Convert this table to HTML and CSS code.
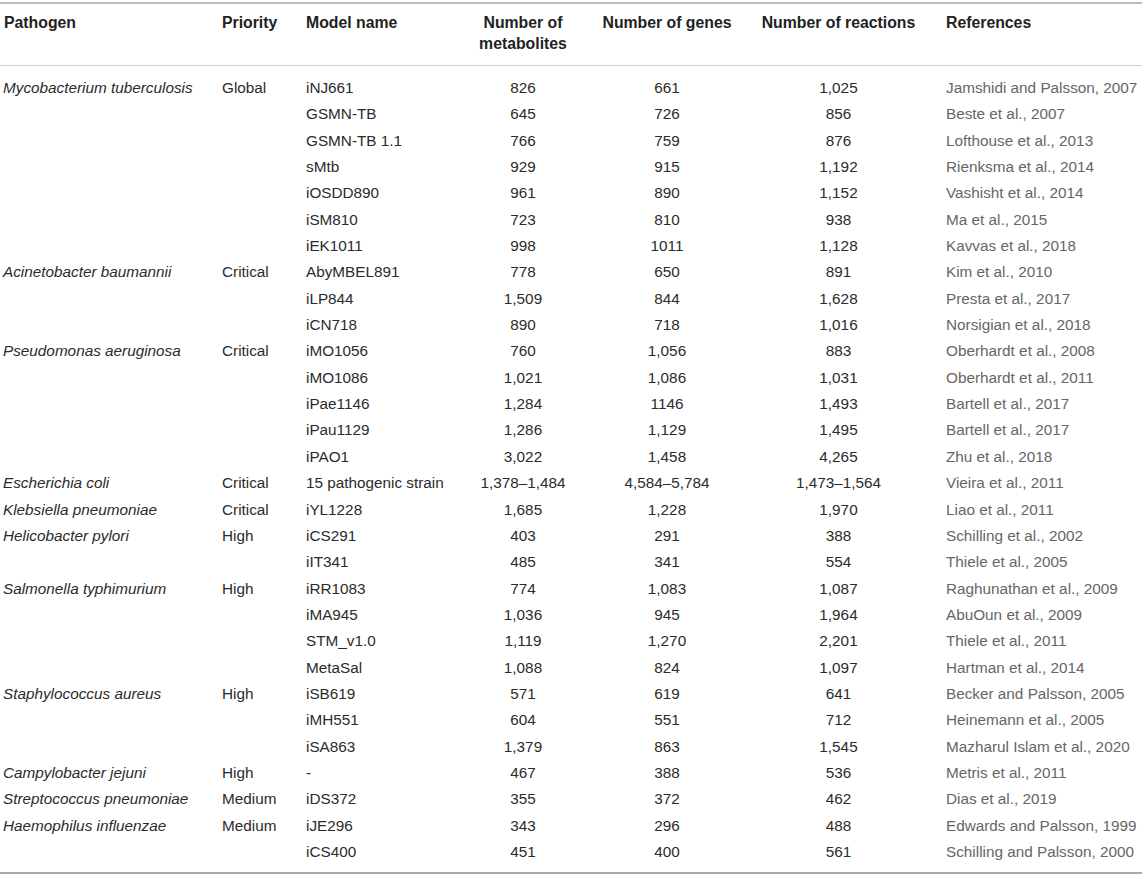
FILE: index.html
```html
<!DOCTYPE html>
<html lang="en">
<head>
<meta charset="utf-8">
<title>Pathogen metabolic models</title>
<link rel="stylesheet" href="styles.css">
</head>
<body>
<table class="models">
  <colgroup>
    <col class="c-path"><col class="c-prio"><col class="c-model"><col class="c-met"><col class="c-gene"><col class="c-rxn"><col class="c-ref">
  </colgroup>
  <thead>
    <tr>
      <th class="left">Pathogen</th>
      <th class="left">Priority</th>
      <th class="left">Model name</th>
      <th class="num">Number of<br>metabolites</th>
      <th class="num">Number of genes</th>
      <th class="num">Number of reactions</th>
      <th class="left">References</th>
    </tr>
  </thead>
  <tbody>
    <tr><td class="path">Mycobacterium tuberculosis</td><td>Global</td><td>iNJ661</td><td class="num">826</td><td class="num">661</td><td class="num">1,025</td><td class="ref">Jamshidi and Palsson, 2007</td></tr>
    <tr><td class="path"></td><td></td><td>GSMN-TB</td><td class="num">645</td><td class="num">726</td><td class="num">856</td><td class="ref">Beste et al., 2007</td></tr>
    <tr><td class="path"></td><td></td><td>GSMN-TB 1.1</td><td class="num">766</td><td class="num">759</td><td class="num">876</td><td class="ref">Lofthouse et al., 2013</td></tr>
    <tr><td class="path"></td><td></td><td>sMtb</td><td class="num">929</td><td class="num">915</td><td class="num">1,192</td><td class="ref">Rienksma et al., 2014</td></tr>
    <tr><td class="path"></td><td></td><td>iOSDD890</td><td class="num">961</td><td class="num">890</td><td class="num">1,152</td><td class="ref">Vashisht et al., 2014</td></tr>
    <tr><td class="path"></td><td></td><td>iSM810</td><td class="num">723</td><td class="num">810</td><td class="num">938</td><td class="ref">Ma et al., 2015</td></tr>
    <tr><td class="path"></td><td></td><td>iEK1011</td><td class="num">998</td><td class="num">1011</td><td class="num">1,128</td><td class="ref">Kavvas et al., 2018</td></tr>
    <tr><td class="path">Acinetobacter baumannii</td><td>Critical</td><td>AbyMBEL891</td><td class="num">778</td><td class="num">650</td><td class="num">891</td><td class="ref">Kim et al., 2010</td></tr>
    <tr><td class="path"></td><td></td><td>iLP844</td><td class="num">1,509</td><td class="num">844</td><td class="num">1,628</td><td class="ref">Presta et al., 2017</td></tr>
    <tr><td class="path"></td><td></td><td>iCN718</td><td class="num">890</td><td class="num">718</td><td class="num">1,016</td><td class="ref">Norsigian et al., 2018</td></tr>
    <tr><td class="path">Pseudomonas aeruginosa</td><td>Critical</td><td>iMO1056</td><td class="num">760</td><td class="num">1,056</td><td class="num">883</td><td class="ref">Oberhardt et al., 2008</td></tr>
    <tr><td class="path"></td><td></td><td>iMO1086</td><td class="num">1,021</td><td class="num">1,086</td><td class="num">1,031</td><td class="ref">Oberhardt et al., 2011</td></tr>
    <tr><td class="path"></td><td></td><td>iPae1146</td><td class="num">1,284</td><td class="num">1146</td><td class="num">1,493</td><td class="ref">Bartell et al., 2017</td></tr>
    <tr><td class="path"></td><td></td><td>iPau1129</td><td class="num">1,286</td><td class="num">1,129</td><td class="num">1,495</td><td class="ref">Bartell et al., 2017</td></tr>
    <tr><td class="path"></td><td></td><td>iPAO1</td><td class="num">3,022</td><td class="num">1,458</td><td class="num">4,265</td><td class="ref">Zhu et al., 2018</td></tr>
    <tr><td class="path">Escherichia coli</td><td>Critical</td><td>15 pathogenic strain</td><td class="num">1,378–1,484</td><td class="num">4,584–5,784</td><td class="num">1,473–1,564</td><td class="ref">Vieira et al., 2011</td></tr>
    <tr><td class="path">Klebsiella pneumoniae</td><td>Critical</td><td>iYL1228</td><td class="num">1,685</td><td class="num">1,228</td><td class="num">1,970</td><td class="ref">Liao et al., 2011</td></tr>
    <tr><td class="path">Helicobacter pylori</td><td>High</td><td>iCS291</td><td class="num">403</td><td class="num">291</td><td class="num">388</td><td class="ref">Schilling et al., 2002</td></tr>
    <tr><td class="path"></td><td></td><td>iIT341</td><td class="num">485</td><td class="num">341</td><td class="num">554</td><td class="ref">Thiele et al., 2005</td></tr>
    <tr><td class="path">Salmonella typhimurium</td><td>High</td><td>iRR1083</td><td class="num">774</td><td class="num">1,083</td><td class="num">1,087</td><td class="ref">Raghunathan et al., 2009</td></tr>
    <tr><td class="path"></td><td></td><td>iMA945</td><td class="num">1,036</td><td class="num">945</td><td class="num">1,964</td><td class="ref">AbuOun et al., 2009</td></tr>
    <tr><td class="path"></td><td></td><td>STM_v1.0</td><td class="num">1,119</td><td class="num">1,270</td><td class="num">2,201</td><td class="ref">Thiele et al., 2011</td></tr>
    <tr><td class="path"></td><td></td><td>MetaSal</td><td class="num">1,088</td><td class="num">824</td><td class="num">1,097</td><td class="ref">Hartman et al., 2014</td></tr>
    <tr><td class="path">Staphylococcus aureus</td><td>High</td><td>iSB619</td><td class="num">571</td><td class="num">619</td><td class="num">641</td><td class="ref">Becker and Palsson, 2005</td></tr>
    <tr><td class="path"></td><td></td><td>iMH551</td><td class="num">604</td><td class="num">551</td><td class="num">712</td><td class="ref">Heinemann et al., 2005</td></tr>
    <tr><td class="path"></td><td></td><td>iSA863</td><td class="num">1,379</td><td class="num">863</td><td class="num">1,545</td><td class="ref">Mazharul Islam et al., 2020</td></tr>
    <tr><td class="path">Campylobacter jejuni</td><td>High</td><td>-</td><td class="num">467</td><td class="num">388</td><td class="num">536</td><td class="ref">Metris et al., 2011</td></tr>
    <tr><td class="path">Streptococcus pneumoniae</td><td>Medium</td><td>iDS372</td><td class="num">355</td><td class="num">372</td><td class="num">462</td><td class="ref">Dias et al., 2019</td></tr>
    <tr><td class="path">Haemophilus influenzae</td><td>Medium</td><td>iJE296</td><td class="num">343</td><td class="num">296</td><td class="num">488</td><td class="ref">Edwards and Palsson, 1999</td></tr>
    <tr><td class="path"></td><td></td><td>iCS400</td><td class="num">451</td><td class="num">400</td><td class="num">561</td><td class="ref">Schilling and Palsson, 2000</td></tr>
  </tbody>
</table>
</body>
</html>
```
FILE: styles.css
```css
html, body {
  margin: 0;
  padding: 0;
  background: #ffffff;
}

body {
  font-family: "Liberation Sans", Arial, Helvetica, sans-serif;
  font-size: 15.3px;
  color: #2b2b2b;
}

.models {
  margin-top: 2px;
  width: 1142px;
  border-collapse: collapse;
  table-layout: fixed;
  border-top: 2px solid #bdbdbd;
  border-bottom: 2px solid #a9a9a9;
}

.c-path { width: 218px; }
.c-prio { width: 84px; }
.c-model { width: 145px; }
.c-met { width: 152px; }
.c-gene { width: 136px; }
.c-rxn { width: 207px; }
.c-ref { width: 200px; }

.models th {
  font-weight: bold;
  font-size: 15.8px;
  color: #222222;
  line-height: 21px;
  padding: 8px 4px 11px 4px;
  vertical-align: top;
  text-align: left;
  border-bottom: 1px solid #cfcfcf;
  white-space: nowrap;
}

.models th.num {
  text-align: center;
  padding-left: 0;
  padding-right: 0;
}

.models td {
  line-height: 26.35px;
  padding: 0 4px;
  white-space: nowrap;
  vertical-align: middle;
}

.models td.path {
  font-style: italic;
  padding-left: 3px;
}

.models td.num {
  text-align: center;
  padding: 0;
}

.models td.ref {
  color: #666666;
}

.models tbody tr:first-child td {
  padding-top: 9px;
}

.models tbody tr:last-child td {
  padding-bottom: 7px;
}
```
